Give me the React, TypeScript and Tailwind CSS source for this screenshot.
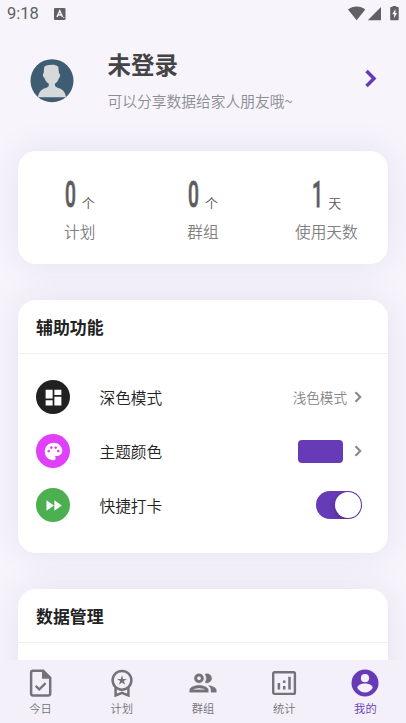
import type { ReactNode } from "react";
import {
  MdDashboard,
  MdFastForward,
  MdPalette,
} from "react-icons/md";

type TabItem = {
  label: string;
  icon: ReactNode;
  active?: boolean;
};

const stats = [
  { value: "0", unit: "个", label: "计划" },
  { value: "0", unit: "个", label: "群组" },
  { value: "1", unit: "天", label: "使用天数" },
];

const tabs: TabItem[] = [
  {
    label: "今日",
    icon: (
      <svg viewBox="0 0 28 28" className="h-7 w-7" fill="none">
        <path
          d="M6 1.700h10.200l7 7V24.500a1.900 1.900 0 0 1-1.900 1.900H6A1.900 1.900 0 0 1 4.100 24.500V3.600A1.900 1.900 0 0 1 6 1.700Z"
          stroke="currentColor"
          strokeWidth="2.500"
        />
        <path d="M15 1v8.800h8.800Z" fill="currentColor" />
        <path d="m8.700 16.900 3.600 3.500 6.300-6.300" stroke="currentColor" strokeWidth="2.200" />
      </svg>
    ),
  },
  {
    label: "计划",
    icon: (
      <svg viewBox="0 0 28 28" className="h-7 w-7" fill="none">
        <circle cx="14" cy="11.300" r="9.400" stroke="currentColor" strokeWidth="2.500" />
        <path d="M7.600 18.500v8l6.400-2.600 6.400 2.600v-8" stroke="currentColor" strokeWidth="2.500" />
        <path
          d="m14 6.300 1.200 3.600h3.700l-3 2.200 1.200 3.600-3.100-2.200-3.100 2.200 1.200-3.600-3-2.200h3.700Z"
          fill="currentColor"
        />
      </svg>
    ),
  },
  {
    label: "群组",
    icon: (
      <svg
        viewBox="0 0 24 24"
        className="-m-0.5 h-8 w-8"
        fill="currentColor"
        stroke="currentColor"
        strokeWidth="0.250"
      >
        <path d="M9 13.750c-2.340 0-7 1.170-7 3.500V19h14v-1.750c0-2.330-4.660-3.500-7-3.500ZM4.340 17c.84-.58 2.870-1.250 4.660-1.250s3.820.67 4.660 1.250H4.340ZM9 12c1.930 0 3.500-1.570 3.500-3.500S10.930 5 9 5 5.500 6.570 5.500 8.500 7.070 12 9 12Zm0-5c.83 0 1.500.67 1.500 1.500S9.830 10 9 10s-1.500-.67-1.500-1.500S8.170 7 9 7Zm7.040 6.810c1.160.84 1.960 1.960 1.960 3.440V19h4v-1.750c0-2.020-3.500-3.170-5.960-3.440ZM15 12c1.930 0 3.500-1.570 3.500-3.500S16.930 5 15 5c-.54 0-1.040.13-1.500.35.630.89 1 1.980 1 3.150s-.37 2.260-1 3.150c.46.22.96.35 1.500.35Z" />
      </svg>
    ),
  },
  {
    label: "统计",
    icon: (
      <svg viewBox="0 0 28 28" className="h-7 w-7" fill="none" stroke="currentColor">
        <rect x="3.200" y="3.200" width="21.700" height="21.700" rx="1.400" strokeWidth="2.400" />
        <path d="M8.900 14v6.500M14.200 11.500v2.600M14.200 17v3.500M19.500 7.800v12.700" strokeWidth="2.500" />
      </svg>
    ),
  },
  {
    label: "我的",
    active: true,
    icon: (
      <svg viewBox="0 0 28 28" className="h-7 w-7">
        <circle cx="14" cy="14" r="13.500" fill="currentColor" />
        <circle cx="14" cy="9.200" r="4.100" fill="#f3f0fa" />
        <path d="M6.200 18.800C7 15.800 10.500 14.500 14 14.500s7 1.300 7.800 4.300C20 21.900 17.300 23.500 14 23.500s-6-1.600-7.800-4.700Z" fill="#f3f0fa" />
      </svg>
    ),
  },
];

function Chevron({ className }: { className: string }) {
  return (
    <svg viewBox="0 0 8 12" className={className} fill="none">
      <path d="m1.500 1.300 4.700 4.700-4.700 4.700" stroke="currentColor" strokeWidth="2.200" />
    </svg>
  );
}

function StatusBar() {
  return (
    <div className="flex h-7 items-center justify-between pl-[7px] pr-[6px] text-[#626064]">
      <div className="flex items-center gap-[15px]">
        <span className="font-[Roboto] text-[16.500px] leading-none">9:18</span>
        <svg viewBox="0 0 12 12" className="h-3 w-3">
          <rect width="11.500" height="12" rx="1" fill="currentColor" />
          <path d="m3 9 2.800-6.200L8.500 9M4.200 7h3.300" fill="none" stroke="#f7f4fc" strokeWidth="1.500" />
          <path d="M9.300 9.500h1" stroke="#f7f4fc" strokeWidth="1" />
        </svg>
      </div>
      <svg viewBox="0 0.800 52 16" className="h-4 w-[52px]" fill="currentColor">
        <path d="M0 4.200C4.800.2 12.500.2 17.300 4.200L8.650 15Z" />
        <path d="M33 1.800V15H19.800Z" />
        <path d="M44.500.3h3.800v1.500h1.400c.7 0 1 .4 1 1V14c0 .7-.3 1-1 1h-6.500c-.7 0-1-.3-1-1V2.800c0-.6.3-1 1-1h1.300Z" />
        <path d="m47.400 3.800-3.200 5.200h1.900v4l3-5.200h-1.700Z" fill="#f7f4fc" />
      </svg>
    </div>
  );
}

function ProfileHeader() {
  return (
    <header className="flex h-[123px] items-start pl-[30px] pr-[29px] pt-[22px]">
      <svg viewBox="0 0 44 44" className="mt-[9px] h-[44px] w-[44px] shrink-0">
        <circle cx="22" cy="21.700" r="21.500" fill="#3e5d73" />
        <path
          d="M14.200 8C16 5.300 26 4.700 28.300 7.800L29 14.600C31 15 30.200 18 28.900 19.300C28 22.500 26.500 23.500 24.900 24.800C24.600 27.500 26 28.400 29 29.300C33.500 30.700 35.500 34 36 38.300H8C8.500 34 10.500 30.700 15 29.300C18 28.400 19.300 27.500 18.800 24.800C17 23.500 15.600 22.500 14.600 19.300C13 18 12.300 15 13.600 14.500Z"
          fill="#d6d9da"
        />
      </svg>
      <div className="ml-[33.500px] flex-1">
        <h1 className="text-[23.500px] font-bold leading-[29px] text-[#444446]">未登录</h1>
        <p className="mt-[11px] text-[14.750px] font-[350] leading-[22px] text-[#8c8c93]">
          可以分享数据给家人朋友哦~
        </p>
      </div>
      <Chevron className="mt-[18.500px] h-[19px] w-[13px] text-[#673ab7]" />
    </header>
  );
}

function StatsCard() {
  return (
    <section className="grid h-[113px] shrink-0 grid-cols-3 rounded-[18px] bg-white shadow-[0_0_36px_rgba(70,40,110,0.09)]">
      {stats.map((stat) => (
        <div key={stat.label} className="flex flex-col items-center pt-[26px]">
          <div className="flex h-[36px] items-end justify-center gap-[5px]">
            <span className="flex h-[37px] w-[12px] justify-center font-[Roboto] text-[37px] font-medium leading-[37px] text-[#5c5c5c]">
              <span className="scale-x-[0.52] [-webkit-text-stroke:0.8px_#5c5c5c]">{stat.value}</span>
            </span>
            <span className="text-[13px] font-[350] leading-[20px] text-[#555]">{stat.unit}</span>
          </div>
          <span className="mt-[7px] text-[15.700px] font-[350] leading-[23px] text-[#808080]">
            {stat.label}
          </span>
        </div>
      ))}
    </section>
  );
}

function SettingRow({
  icon,
  label,
  children,
}: {
  icon: ReactNode;
  label: string;
  children: ReactNode;
}) {
  return (
    <div className="flex h-[54px] items-center">
      {icon}
      <span className="ml-[29.500px] flex-1 pt-px text-[15.700px] font-[350] leading-6 text-[#222]">{label}</span>
      {children}
    </div>
  );
}

function SectionTitle({ children }: { children: ReactNode }) {
  return (
    <h2 className="flex h-[54px] items-center border-b border-[#efeff2] px-[18px] pt-px text-[16.900px] font-bold text-[#222]">
      {children}
    </h2>
  );
}

function BottomTabs() {
  return (
    <nav className="relative z-10 grid h-[63px] shrink-0 grid-cols-5 bg-[#f3f0fa]">
      {tabs.map((tab) => (
        <button
          key={tab.label}
          type="button"
          className={`flex flex-col items-center pt-[9px] ${
            tab.active ? "text-[#673ab7]" : "text-[#757378]"
          }`}
        >
          {tab.icon}
          <span className="mt-[3px] text-[11.300px] font-[350] leading-4">{tab.label}</span>
        </button>
      ))}
    </nav>
  );
}

export default function App() {
  return (
    <div className="flex h-[723px] w-[406px] flex-col overflow-hidden bg-[#f7f4fc] font-['Noto_Sans_CJK_SC',sans-serif]">
      <StatusBar />
      <ProfileHeader />
      <main className="flex min-h-0 flex-1 flex-col gap-9 px-[18px]">
        <StatsCard />

        <section className="h-[253px] shrink-0 rounded-[18px] bg-white shadow-[0_0_36px_rgba(70,40,110,0.09)]">
          <SectionTitle>辅助功能</SectionTitle>
          <div className="pl-[18px] pr-[26px] pt-4">
            <SettingRow
              label="深色模式"
              icon={
                <span className="flex h-[34px] w-[34px] items-center justify-center rounded-full bg-[#212121] text-white">
                  <MdDashboard size={21} />
                </span>
              }
            >
              <span className="mr-[7px] text-[13.600px] font-[350] text-[#858585]">浅色模式</span>
              <Chevron className="h-3 w-2 text-[#8a8a8a]" />
            </SettingRow>
            <SettingRow
              label="主题颜色"
              icon={
                <span className="flex h-[34px] w-[34px] items-center justify-center rounded-full bg-[#e040fb] text-white">
                  <MdPalette size={21} />
                </span>
              }
            >
              <span className="mr-[11px] h-[23px] w-[45px] rounded-[4px] bg-[#673ab7]" />
              <Chevron className="h-3 w-2 text-[#8a8a8a]" />
            </SettingRow>
            <SettingRow
              label="快捷打卡"
              icon={
                <span className="flex h-[34px] w-[34px] items-center justify-center rounded-full bg-[#4caf50] text-white">
                  <MdFastForward size={21} />
                </span>
              }
            >
              <span className="flex h-[28px] w-[46px] items-center justify-end overflow-hidden rounded-full bg-[#673ab7] pr-[1px]">
                <span className="h-[26px] w-[26px] rounded-full bg-white shadow-[0_2px_6px_rgba(0,0,0,0.25)]" />
              </span>
            </SettingRow>
          </div>
        </section>

        <section className="h-[253px] shrink-0 rounded-[18px] bg-white shadow-[0_0_36px_rgba(70,40,110,0.09)]">
          <SectionTitle>数据管理</SectionTitle>
        </section>
      </main>
      <BottomTabs />
    </div>
  );
}
